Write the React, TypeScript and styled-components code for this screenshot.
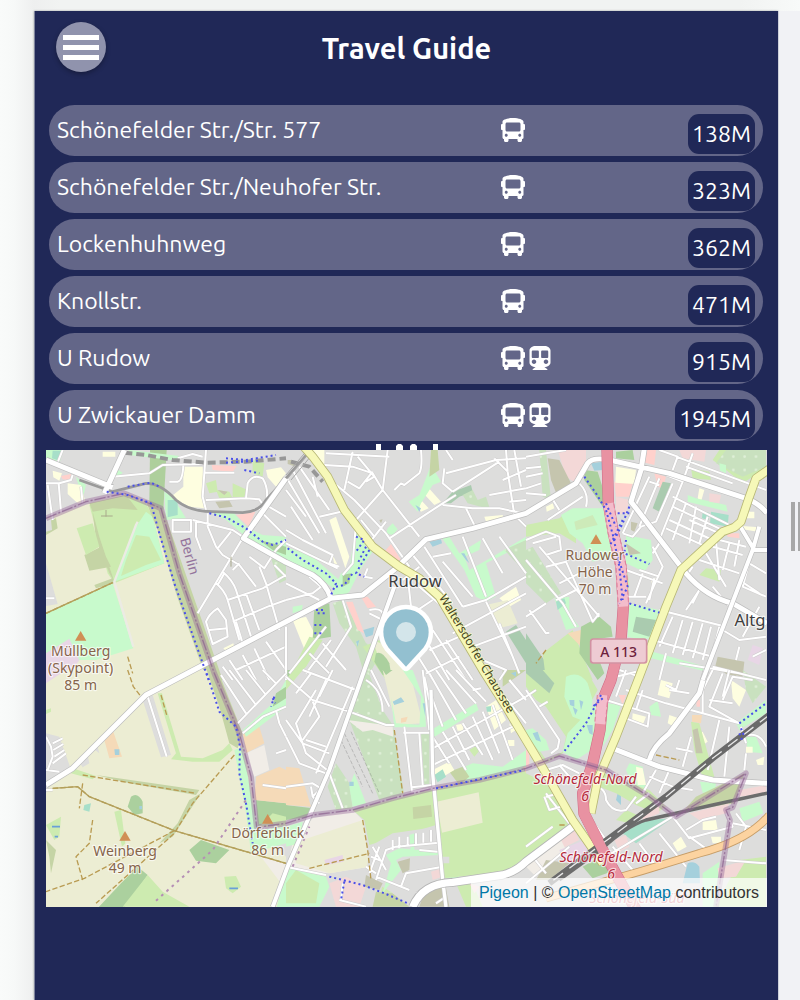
import React from 'react';
import styled, { createGlobalStyle } from 'styled-components';
import { FaBus, FaSubway } from 'react-icons/fa';

const navy = '#202857';

const GlobalStyle = createGlobalStyle`
  * { box-sizing: border-box; }
  body { margin: 0; background: #f4f6f5; font-family: Ubuntu, 'Noto Sans', sans-serif; }
`;

const Page = styled.div`
  display: grid;
  grid-template-columns: 34px minmax(0, 1fr) 22px;
  grid-template-rows: 11px auto;
  min-height: 100vh;
  overflow: hidden;
  background: linear-gradient(90deg, #f9fbfa 0, #f7f9f8 14px, #eeefef 34px, #f1f3f2 60px, #f1f3f2 calc(100% - 60px), #f8faf9 100%);
`;

const Panel = styled.main`
  grid-column: 2;
  grid-row: 2;
  padding: 0 11px;
  background: ${navy};
  border-left: 1px solid #7f849d;
  box-shadow: 0 0 2px #9aa09d;
  color: #fff;
`;

const Gutter = styled.div`
  grid-column: 3;
  grid-row: 2;
  display: flex;
  align-items: center;
  gap: 3px;
  padding: 42px 0 0 12px;
  background: #f1f2f5;
  border-left: 1px solid #cdd0da;
  overflow: hidden;
`;

const Grip = styled.span`
  flex: none;
  width: 4px;
  height: 49px;
  background: #a8a8a8;
`;

const Header = styled.header`
  display: grid;
  grid-template-columns: 50px 1fr 50px;
  align-items: center;
  padding: 11px 10px 33px;
`;

const MenuButton = styled.button`
  display: flex;
  flex-direction: column;
  align-items: center;
  justify-content: center;
  gap: 5px;
  width: 50px;
  height: 50px;
  padding: 0;
  border: 0;
  border-radius: 50%;
  background: #9093ad;
  box-shadow: 0 2px 5px rgba(0, 0, 0, 0.3);
`;

const Bar = styled.span`
  width: 36px;
  height: 5px;
  background: #fff;
`;

const Title = styled.h1`
  margin: 0;
  padding-top: 2px;
  font-size: 29px;
  line-height: 36px;
  text-align: center;
`;

const StopList = styled.ul`
  display: grid;
  gap: 6px;
  margin: 0;
  padding: 0 4px 0 3px;
  list-style: none;
`;

const Stop = styled.li`
  display: grid;
  grid-template-columns: minmax(0, 7fr) minmax(0, 4fr);
  height: 51px;
  padding: 0 8px;
  border-radius: 26px;
  background: #636688;
`;

const StopName = styled.span`
  font-size: 23px;
  line-height: 50px;
  white-space: nowrap;
`;

const StopInfo = styled.div`
  display: flex;
  justify-content: space-between;
  align-items: flex-start;
`;

const Modes = styled.span`
  display: flex;
  gap: 3px;
  padding-top: 13px;
  font-size: 24px;
`;

const Distance = styled.span`
  margin-top: 9px;
  padding: 0 4px;
  border-radius: 11px;
  background: ${navy};
  font-size: 23px;
  line-height: 40px;
`;

const Loader = styled.svg`
  display: block;
  width: 64px;
  height: 6px;
  margin: 3px auto 0;
`;

const MapBox = styled.section`
  position: relative;
  height: 457px;
  overflow: hidden;
  background: #dddddc;
`;

const MapDrawing = styled.svg`
  display: block;
  width: 100%;
  height: 100%;
  font-family: 'Noto Sans', sans-serif;
`;

const Attribution = styled.div`
  position: absolute;
  right: 0;
  bottom: 0;
  padding: 0 8px;
  background: rgba(255, 255, 255, 0.7);
  color: #333;
  font: 16px/29px 'Liberation Sans', Arial, sans-serif;
`;

const MapLink = styled.a`
  color: #0078a8;
  text-decoration: none;
`;

const stops = [
  { name: 'Schönefelder Str./Str. 577', distance: '138M', subway: false },
  { name: 'Schönefelder Str./Neuhofer Str.', distance: '323M', subway: false },
  { name: 'Lockenhuhnweg', distance: '362M', subway: false },
  { name: 'Knollstr.', distance: '471M', subway: false },
  { name: 'U Rudow', distance: '915M', subway: true },
  { name: 'U Zwickauer Damm', distance: '1945M', subway: true },
];

const c = {
  farm: '#ecedd3', meadow: '#cdebb0', wood: '#abd09e', mint: '#c8facc', olive: '#c5d4a5',
  pitch: '#a7dfc9', plots: '#c9e1bf', school: '#fefee0', pink: '#f3d8d7', shop: '#ffd1cc',
  sand: '#f5dab8', grave: '#aacbaf', water: '#a5d0dc', grey: '#dddddc', brown: '#c5c5ae',
  lilac: '#e8d6e6', pale: '#f1ede7',
};

type Tile = { x: number; y: number; areas: [string, string][]; streets: string; dots?: string };

const tiles: Tile[] = [
  {
    x: 0, y: -30,
    areas: [
      [c.farm, 'M0 235L130 190 240 160 345 205 520 720H0Z'],
      [c.meadow, 'M130 195L240 165 300 190 320 230 355 370 205 430 185 400Z'],
      [c.mint, 'M300 215L320 230 355 370 205 425 270 260Z'],
      [c.meadow, 'M270 285L310 290 345 360 300 375 225 408 240 360Z'],
      [c.olive, 'M130 190L240 165 275 210 200 205 140 215ZM140 215L160 290 205 425 190 400 150 300ZM115 345L165 320 195 380 130 392ZM145 435L200 415 205 430 150 445ZM0 245L30 235 35 265 0 285Z'],
      [c.meadow, 'M92 265L140 250 160 320 120 345Z'],
      [c.olive, 'M302 190L350 205 530 720H482L390 460 335 270Z'],
      [c.mint, 'M0 520L200 430 262 625 150 660 90 660 0 640Z'],
      [c.lilac, 'M0 640L70 596 100 660 60 720H0Z'],
      [c.grey, 'M0 370L35 492 0 498ZM0 235L15 240 18 270 0 275Z'],
      ['#aecf9c', 'M312 30H362L352 210 310 190Z'],
      [c.mint, 'M0 30H52L40 72 0 55ZM90 110L120 135 110 180ZM205 82L230 98 220 108 200 100ZM250 30L400 48 395 62 250 45ZM355 155L380 170 420 235 360 240Z'],
      [c.pitch, 'M365 180H395V225L365 232ZM20 32H48L40 62 18 55ZM425 85H440V100H425ZM98 158L112 160 108 175 95 170Z'],
      [c.school, 'M412 80H470L475 205 430 200 375 170 412 140ZM65 130L105 135 118 185 95 190 65 162ZM170 35H208V50H170ZM660 90L705 82 720 100 690 140 665 112ZM20 92L48 100 40 122 22 112ZM532 625L562 610 565 622 540 634Z'],
      [c.shop, 'M497 75L572 78 560 96 500 90ZM570 225L628 215 608 260ZM45 108L75 102 72 120 50 118Z'],
      [c.meadow, 'M480 130L510 120 515 155 490 160ZM510 150L550 155 560 175 520 175ZM560 130L604 150 590 180 560 170ZM620 60L655 70 650 110 620 100Z'],
      [c.brown, 'M508 185L550 182 560 200 520 205ZM515 150L545 155 535 165Z'],
      [c.mint, 'M500 220L560 215 600 260 650 285 720 290V372L650 325 600 290 540 240Z'],
      [c.wood, 'M640 300L720 320V345L680 330Z'],
      [c.plots, 'M675 355L720 372V420L700 430Z'],
    ],
    streets: 'M50 30L30 80M0 130H40L75 120 80 105M5 135L20 240M38 130L45 215M105 140L110 190M200 110L310 100 350 75 470 72M480 30L470 170 480 210M370 125H395Q410 122 412 75M395 55L440 42 470 50M475 98H565M480 180L600 175 605 130Q620 100 650 115Q670 150 660 185L640 210M600 175L640 178 655 200M440 240L560 270 590 290M485 220V260L510 320 530 345 580 375 630 440M555 275L515 325M590 295L455 520M580 370L560 390M530 395Q560 420 570 450L615 590M510 430Q535 450 545 480L580 600M640 380L660 430 700 570M610 350L655 385 690 330M545 480L650 445 720 405M560 545L665 500 720 480M480 545Q490 520 515 505L540 540 545 590 500 612ZM490 570L545 565M570 545L590 610M600 460L640 570M535 400L515 435M640 210L720 290M660 195L720 230M690 330L720 300M685 375L720 410M450 240V290L465 330M380 240V275H435V240ZM530 680L560 720M550 660L590 720M590 645L630 720M625 625L670 720M660 605L720 690M570 690L720 620M0 475H25',
    dots: 'M182 155L245 165 315 190 340 280 385 430 440 585 488 720M245 140L315 128 340 140M540 55L600 60 690 45M540 68L640 62M595 90L640 100M490 220L540 232 600 265 650 305 680 315 720 300',
  },
  {
    x: 720, y: -30,
    areas: [
      [c.school, 'M70 30H115V80L95 70ZM130 240L150 230 190 350 178 385ZM140 345L160 385 145 375ZM420 135L465 185 445 195 412 160ZM400 175L428 205 405 215 390 195ZM595 230L650 225 655 238 600 245ZM20 540L60 530 85 580 60 640ZM640 475L690 440 705 480 670 500Z'],
      [c.mint, 'M435 75L465 125 440 135 405 190 395 215 368 185 400 165ZM305 265L320 250 335 268 320 285 300 280ZM205 280L225 275 260 335 225 385 190 455 160 480 135 470 165 400 190 390ZM0 320L80 350 160 420 150 450 80 400 0 360ZM465 290H490L520 340 585 300 580 330 535 350 550 390 620 350 720 290V310L600 370 630 470 600 485 570 470 535 390ZM20 500L50 495 48 510 20 520Z'],
      [c.olive, 'M435 30H455L460 90 430 110Z'],
      [c.grave, 'M470 190L500 155 555 135 560 155 520 170 495 190ZM660 575L690 555 720 600V670Z'],
      [c.plots, 'M530 165L560 150 575 180 600 170 612 208 545 190ZM140 490L170 480 215 560 240 610 290 630 240 720 210 620 160 550ZM655 330L720 300V400Z'],
      [c.shop, 'M315 312L345 360 320 370 295 335ZM180 485H200L235 580 215 570ZM225 470H245L270 500 245 505Z'],
      [c.wood, 'M170 405L195 400 190 430 170 440ZM85 500L130 490 135 590 80 600Z'],
      [c.meadow, 'M70 590L110 600 60 680 20 720H5ZM230 620L280 600 330 720H300Z'],
      [c.farm, 'M600 495L665 480 695 550 640 565ZM260 600L310 620 370 720H300Z'],
      [c.wood, 'M270 640Q290 630 310 670L315 700 290 705 265 665Z'],
      [c.water, 'M430 305L465 298 468 310 440 320ZM525 340H535L550 370 540 360ZM232 570L265 560 260 585 240 592ZM210 605L220 600 215 620ZM388 195L405 205 400 215Z'],
      [c.brown, 'M5 60L20 60 30 80 5 72ZM280 240L290 238 285 250Z'],
    ],
    streets: 'M115 75L200 80M200 35L175 150M120 40L310 50M200 80L260 100 290 150 400 290M305 30L290 150 210 240M215 50L265 110 240 125M185 125L220 145 260 95M405 30Q410 80 400 100L355 135 345 130 325 150M475 85L470 130 500 155M480 100L630 60 720 55M500 155L640 65M510 165L470 190 310 295M470 195L560 205 640 205 720 222M625 55L665 95 685 225M660 30L665 95M685 30L705 140M610 165L720 145M670 185L720 180M720 90L650 120M540 205L570 265M480 30L500 60M0 110L100 280M20 90L120 280M0 150L60 230M15 200L80 300M40 80L130 210M0 270L50 300 140 345 130 370 160 380M0 310L155 385M100 230L165 215M95 170L80 110M145 130L205 180 300 280 370 380M300 245L265 290M225 240L265 290 240 320M210 250L200 370 170 405M245 385L235 410 260 415M415 320L530 500M380 345L500 490M440 350L495 340M400 380L350 420M470 365L560 470M530 500L600 480 720 410M480 500L580 640M530 290L600 470M590 295L650 400M640 290L720 400M720 260L690 230M600 485L680 650M500 580L720 460M440 480L380 520M365 410L375 500M560 620L720 560M400 440L470 500M70 410L105 440 80 460M0 430L100 480M0 480L80 460M170 480L195 560 120 680M135 600L60 700M0 560V720M120 560L10 700M110 610L180 690M70 640L130 700M250 510Q300 500 290 540L250 520M390 640L440 720M420 600L490 720M440 570L540 720M480 600L560 720M430 630L520 590M590 660L660 690 640 720M640 550L700 700M420 700L520 650',
    dots: 'M5 325L50 360 120 400 150 430 135 465M210 290L235 300 210 335M250 330L210 400 235 410M240 320L215 370M150 440L175 435 200 400M90 510H120M95 520H120M85 555H115M85 580H115',
  },
  {
    x: 1440, y: -30,
    areas: [
      [c.pink, 'M95 30H180V90L150 130 120 110ZM460 30H540L535 65 470 55Z'],
      [c.brown, 'M65 55L100 60 135 130 95 170 75 120Z'],
      [c.plots, 'M40 30H60L75 180 50 170ZM0 330L20 320 105 460 60 490 0 430Z'],
      [c.shop, 'M265 125L320 130 310 170 270 170ZM385 100L420 110 410 145 395 140ZM350 30H390L385 75 345 65ZM600 280H640V295L605 290Z'],
      [c.school, 'M270 80L330 90 325 132 268 128ZM60 200L80 190 85 205 62 215ZM520 145L535 150 525 185 515 175ZM655 215H685V235H655ZM650 258L700 262 695 275 650 268ZM375 415H390V435H378Z'],
      [c.wood, 'M175 90L215 95 245 190 230 200 175 120ZM270 35L320 30 325 60 270 55Z'],
      [c.water, 'M195 70L230 65V90L205 92Z'],
      [c.meadow, 'M0 255L100 235 130 210 150 260 150 310 100 280 0 290ZM580 30H720V85L650 130 600 90 560 60ZM495 85L550 95 555 120 500 115ZM540 385L585 390 580 425 520 405Z'],
      [c.plots, 'M600 30H720V80L650 110 570 70Z'],
      [c.mint, 'M105 225L140 205H230L260 280 255 350 200 365 170 310 130 280ZM300 285L375 300 380 360 355 395 300 370ZM485 165L510 175 600 195 605 215 485 185ZM310 490L400 510 380 590 350 600 305 590ZM85 475L130 470 130 520 160 560 120 570ZM580 70L600 75V100L582 92Z'],
      ['#cdeab9', 'M145 245L200 225 215 255 150 270ZM300 370L310 430 305 490 290 440Z'],
      [c.pitch, 'M555 215L608 225 605 260 552 250ZM530 215L550 218 548 240 528 235ZM90 485L115 475 120 490 95 510Z'],
      [c.grave, 'M410 125L435 130 400 215 380 205ZM0 580L75 690 60 720H0ZM330 530L390 540 370 590 320 575Z'],
      [c.brown, 'M300 310L345 340 310 345ZM315 245L335 250 325 275 315 270ZM575 650L655 665 650 710 565 690Z'],
      [c.meadow, 'M50 640L140 570 200 720H60Z'],
      [c.sand, 'M125 580L165 570 190 610 180 635Z'],
      [c.wood, 'M165 560L220 530 255 560 260 590 195 600 235 700 215 720 160 640Z'],
      [c.mint, 'M380 635L540 680 530 692 375 655Z'],
      [c.lilac, 'M680 615L710 625 700 675 665 660Z'],
      [c.pink, 'M550 160L585 165 580 190 550 185ZM270 170L310 180 300 220 270 225Z'],
    ],
    streets: 'M0 85L45 80M0 110L50 100M0 145L45 130M0 160L60 165M0 50L60 40 120 30M65 240L170 170M75 170L100 210M160 130Q190 160 180 200M370 110L290 280M400 115L340 260M290 280L320 290 345 260 390 245 440 130M370 125L400 135M420 105L470 125 440 200 400 300M470 125L500 40M440 170L620 260M440 200L600 275M430 240L560 300M420 265L540 320M480 190L440 300M510 200L490 310M545 230L520 310M440 90L455 50 400 30M450 50L720 150M480 80L620 130M490 240L580 280M580 300L660 320M560 320L650 345M640 300L625 380M610 310L590 390M540 340L600 440M520 360L640 400M500 380L480 410M570 300L580 420M670 370L720 400M640 420L700 460M680 330L650 440 720 470M380 320L410 380 360 490M340 390L400 410M300 390L410 430M350 400L325 470M385 415L370 480M400 310L380 340M0 300L60 275 100 290 105 330 60 345M0 360L110 490 150 560M40 320L220 530M20 310L90 290M60 380L120 365 200 545 220 520M100 430L160 400M90 480L150 450M0 530L60 490M10 510L60 580 70 578M480 510L520 450 500 490M400 510L600 560M380 600L560 650M440 530L400 620M470 540L440 640M500 545L470 645M530 550L500 655M555 560L530 660M580 560L560 640M590 570L640 600 720 590M560 680L720 720M640 620L630 660M720 630L680 650M280 690L340 710M420 640L400 720M460 670L640 700M700 500L650 590M610 500L560 440M360 470L290 470',
    dots: 'M175 110L210 160 240 210 262 290 280 380 290 480M310 200L290 250 265 300M275 220H310M290 240L250 320M300 300L295 340 370 372M275 350L305 440 280 490M310 490L400 518M240 190L270 260',
  },
  {
    x: 0, y: 660,
    areas: [
      [c.farm, 'M0 0H510L580 190 615 320 630 470 720 560V720H0Z'],
      [c.lilac, 'M0 0H60L0 40Z'],
      [c.olive, 'M482 0H515L590 190 575 235 550 220 520 110Z'],
      [c.grey, 'M290 90L320 75 375 255 345 262ZM0 190L40 200 72 290 25 325 0 370ZM95 270L125 255 130 280 110 292ZM140 235L155 230 160 250ZM540 0H720V300L690 300 640 210 590 190Z'],
      [c.meadow, 'M335 70H348L405 260 470 265 530 240 550 220 560 240 520 275 440 275 375 268 390 250ZM80 295L150 318 140 328 75 310ZM0 120L15 115V125L0 132ZM205 425L225 420 238 520 228 530ZM0 465L45 440 40 500 25 510ZM535 620L570 618 585 650 560 670 540 655Z'],
      [c.olive, 'M150 315L460 360 450 375 250 340ZM465 370L380 500 340 520 395 460 430 390ZM0 510L30 540 15 610 10 560Z'],
      [c.wood, 'M255 380Q275 365 290 395L290 430 265 435 245 410ZM430 540L465 510 550 540 510 580 450 572ZM630 390L720 400V440L635 470ZM150 720L225 640 275 590 305 615 230 720Z'],
      [c.sand, 'M175 210L200 180 228 260 190 265ZM590 190L640 170 655 220 600 250ZM630 320L700 290 720 300V400L625 390Z'],
      [c.pale, 'M600 250L655 225 670 300 625 320ZM645 560L720 580V660Z'],
      [c.mint, 'M590 180L680 100 720 30V110L600 200ZM565 240L590 230 620 400 635 480 720 470V520L615 550 600 430ZM720 600L690 720H720Z'],
      [c.wood, 'M690 70L720 50V85L680 110Z'],
      [c.meadow, 'M305 615L350 665 430 710H230ZM640 470L680 430 720 440V470Z'],
      [c.water, 'M205 238H220V255H207ZM280 408H288V418H280Z'],
      [c.pitch, 'M115 405L135 400 130 425 112 420Z'],
    ],
    streets: 'M305 80L362 260M525 15L600 130M550 0L630 105M600 0L660 75M650 0L690 40M575 160L720 10M0 200L15 230 20 260 5 300M20 220L50 205M22 240L52 222M25 260L55 240M0 300L40 305M590 190L650 140 720 110M690 120L700 160 720 200M690 250L720 240M650 345L720 355M0 360H20M20 280L60 250',
    dots: 'M482 10L520 125 570 170 582 230 580 310 600 400 620 520M685 80L675 110M680 85L688 100',
  },
  {
    x: 720, y: 660,
    areas: [
      [c.plots, 'M230 0H245L290 120 320 165 355 375 280 390 190 150ZM125 350L150 280 190 340 200 415 150 420ZM405 190H430V345H415Z'],
      [c.pale, 'M185 150L320 168 322 200 260 180 230 185ZM20 520L80 445 200 420 230 450 250 590 130 610 0 600Z'],
      [c.farm, 'M290 0L370 0 410 160 330 165ZM20 520L230 450 250 590 130 610 30 580ZM450 395L578 368 590 460 470 490Z'],
      [c.mint, 'M350 0H380L415 90 420 170 400 172 405 80ZM315 80L330 160 410 165V172H325ZM435 180L570 100 578 120 438 205ZM500 305L560 280 650 290 720 240V300L520 345ZM190 350L205 310 240 400 200 410ZM0 470L50 455 40 520 0 530ZM0 590L120 620 130 650 100 710H0ZM480 590L520 585V625H480Z'],
      [c.farm, 'M455 397L578 368 590 460 470 490Z'],
      [c.meadow, 'M200 420L440 358 450 465 250 525 235 450ZM445 358L720 300V560L660 605 470 625 460 490 448 400ZM510 640L560 640 590 710H540ZM0 0L50 0 0 60ZM300 600L320 570 350 600 330 670 285 665Z'],
      [c.farm, 'M452 395L578 367 590 458 468 488Z'],
      [c.olive, 'M380 412L435 405 438 440 382 447ZM490 305L530 290 550 320 520 345ZM650 0H720L650 50ZM270 665L320 670 370 710H260Z'],
      [c.wood, 'M0 405L80 415 70 440 0 450ZM0 0H20L0 30ZM290 0L320 0 300 15Z'],
      [c.sand, 'M0 290L40 295 75 410 0 405ZM345 145L365 140 360 155 345 158ZM710 290L720 290V310Z'],
      [c.water, 'M320 95L345 82 355 95 325 105ZM410 100H418V140ZM190 335H203V348H190ZM675 10L690 5V20Z'],
      [c.school, 'M440 300L490 275 505 300 455 330ZM600 110L630 90 660 150 625 180ZM510 165L535 160 530 182 515 182ZM665 210H685V228H665ZM670 160L690 180 675 190ZM390 610L435 620 430 650 400 645Z'],
      [c.pitch, 'M445 315L470 298 480 320 455 337ZM600 110L615 108V125H603ZM405 600H425V615H408Z'],
      [c.meadow, 'M550 240L575 225 582 240 565 260ZM0 640L30 600 100 640 90 700H0Z'],
      [c.pink, 'M130 640L180 620 240 650 220 710H150ZM430 600L470 590 465 630 440 625ZM550 640L580 650 565 670ZM420 670L445 655V670L430 685Z'],
      [c.lilac, 'M115 570L170 555 172 575 120 585Z'],
      [c.grey, 'M250 530L320 490 455 470 470 620 430 650 370 700 240 620ZM470 560H490V580H470Z'],
      [c.mint, 'M300 555L340 535 460 545V555L350 560 330 570 345 600 290 670 315 580ZM370 495L385 490V550H375Z'],
      [c.brown, 'M335 575L372 565 370 600 350 610ZM240 615L290 640 280 660 235 650ZM420 650L480 655 490 710H400Z'],
      [c.pink, 'M435 605L468 595 470 620 440 630Z'],
    ],
    streets: 'M0 20L80 90 190 125 300 165 325 165M50 0L210 60M75 10L30 70M120 30L70 140M200 50L90 310M90 60L30 160 60 250 130 305M0 150L50 220 130 250M60 210L120 230M140 0L100 80M0 200L40 280 120 310M80 95L100 140 50 210M240 30Q290 60 290 125M255 0L310 110M355 170L378 365 440 355M352 188H430M400 190L410 345M378 352L440 345M415 20L430 90M410 0L430 180M435 75L470 170M430 10L510 150M450 0L540 130M480 0L570 100M510 0L600 95M540 0L560 30M440 235L620 135 720 80M440 285L680 170M440 200L490 280M470 185L540 300M500 170L550 270M530 160L590 255M560 140L620 270M590 125L640 250M620 105L680 270M640 60L720 160M670 30L720 90M560 60L585 55M260 530L300 600M320 510V540M340 500V535M365 500V530M390 490V525M412 488V518M435 480V515M0 350L80 340 105 355 80 380 75 350M80 380L100 400M130 310L170 415M270 630L300 540 330 530 460 518M250 610L280 530M240 590L270 610M255 560L290 575M270 620L370 660M345 650L360 610 470 590M160 690L240 710M165 690L170 640M400 540L455 545M0 590L120 615M390 670L430 650M450 700L480 680',
    dots: 'M130 620L230 645 300 672 370 702M175 635L165 690M450 355L560 332 715 300',
  },
  {
    x: 1440, y: 660,
    areas: [
      [c.meadow, 'M20 0H180L215 60 110 250 60 280 0 190V0ZM0 310L60 340 135 460 0 560Z'],
      [c.grave, 'M0 0H50L85 40 70 70 0 10Z'],
      [c.grey, 'M0 50L30 90 60 110 120 200 110 245 60 270 0 180Z'],
      [c.mint, 'M120 20Q160 0 185 40L200 90 190 160 140 140 115 80ZM0 180L20 175 60 210 70 240 40 245 0 190ZM125 190L220 90 212 230 150 270 110 245ZM240 100L285 105 260 180 230 230ZM370 110L395 92 405 140 375 135ZM640 415L700 395 712 430 650 455ZM522 335L570 340 565 370 530 368ZM630 160L720 90V130L640 180ZM530 610L580 575 570 710H530ZM660 200L690 200 710 250 665 245ZM310 280L350 290 360 350 330 370 300 300Z'],
      [c.water, 'M130 90H145V110L132 105ZM20 190L35 185 45 215 30 210ZM160 90L172 95 165 120ZM182 165H200V195L190 190ZM140 110L155 120 148 135ZM485 580Q505 570 520 590L522 640H470ZM275 370H285V405L270 390Z'],
      [c.school, 'M405 30L440 40 430 85 395 75ZM320 130L360 140 350 165 318 155ZM430 135L458 145 445 170 425 160ZM505 200L530 185 545 215 510 240ZM440 520L465 500 482 530 455 545ZM530 455L570 450 575 480 530 480ZM615 30L660 60 640 110 620 85ZM660 230H680V248H660ZM690 270L715 260 712 285 695 285ZM555 500H585V520H560ZM330 290L350 295 360 345 335 345ZM260 340L300 345 280 365Z'],
      [c.sand, 'M498 135H528L525 160 498 155Z'],
      [c.plots, 'M650 0L720 50 680 100 660 60Z'],
      [c.meadow, 'M495 155L520 160 565 320 530 325 505 240ZM180 290L370 360 420 410 390 430 330 405 270 370 220 350ZM640 570L720 560V710H570ZM300 420L345 440 310 460 270 450Z'],
      [c.wood, 'M170 590L240 550 270 600 200 625Z'],
      [c.olive, 'M510 380L655 310 625 400 470 425Z'],
      [c.pitch, 'M290 490L360 450 440 445 330 520Z'],
      [c.pink, 'M490 430L610 400 600 430 520 450ZM100 490L140 470 160 510 110 535ZM265 510L300 495 310 530 280 545ZM575 595L660 570 630 620 580 625ZM350 430L400 400 400 430 350 450ZM640 360L720 345V370L640 380Z'],
      [c.shop, 'M278 75H300L290 105ZM510 90H522V110H512ZM0 240H10V290H0Z'],
      [c.pale, 'M0 590L100 500 120 540 30 620Z'],
      [c.lilac, 'M100 540L190 505 200 540 120 600Z'],
      [c.brown, 'M590 0H640L630 18 600 12ZM60 570L130 580 70 630 30 630ZM500 180L515 175 530 250 510 250Z'],
      [c.mint, 'M645 420L700 400 710 425 655 447Z'],
    ],
    streets: 'M0 60L100 210 95 235 75 250M40 110L65 95M30 60L0 80M300 0L270 80M300 60L420 100 640 160M270 20L330 5M240 90L370 130 365 170 300 145M460 30L450 60 420 45M430 60L490 70M530 60V130M590 10L550 110 640 160M590 90L620 20 680 30M550 90L620 100M610 170L595 320M580 150L545 300M645 170L660 220M660 250L655 300M650 200Q700 180 720 230M450 235L500 245M495 200L470 290M370 320L440 350 500 360M390 300L350 370M430 300L400 370M440 440L490 505 620 470 600 430M480 480L530 450 570 440M490 500L560 550M330 400L370 370M200 350Q240 350 240 390Q260 430 300 420L330 380M190 440L240 510M60 370L130 460M60 380L100 370 105 410 70 420 55 380M60 300L110 285 160 310M100 285L130 320M620 460L720 480M630 430L660 470M340 520L400 600M260 530L320 600M240 560L440 440M400 490L480 590M320 560L420 590M0 640L130 530M20 560L60 610M660 470L640 540M590 570L720 580M560 0L530 60M0 530L80 470M330 120L350 60M610 0L590 80',
    dots: 'M225 75L180 160 110 250M230 85L200 110M640 160L720 100M640 190L650 215M645 175L655 200',
  },
];

const yellowRoads = 'M770 -14L800 20 845 80 895 180 980 290 1060 350 1120 385 1180 440 1310 660 1380 770 1440 870 1500 970 1580 1110 1670 1240M2170 57L2130 85 2110 140 2085 215 2065 232 2030 245 1905 360 1860 470 1780 680 1710 860 1655 990 1635 1090';
const mainRoads = 'M0 30L200 112M235 0L175 130M0 1005L80 955 300 735 500 630 720 515 855 445 950 435 1050 355 1140 268 1280 235 1440 190 1590 100 1625 40Q1640 20 1690 30L1870 70 2100 145Q2140 160 2163 190M1795 -5L1785 60 1755 155 1920 370Q1980 440 2060 460L2163 520M1980 660L1960 730 1870 850Q1820 890 1810 930M1700 895L1840 950 2000 990 2163 1000M720 85L592 265 720 337 800 375Q840 400 855 445';
const innerRoads = 'M2140 230L2120 300 1970 690M2080 225L2125 300H2163M1045 410L955 660 850 960 725 1250 680 1371';
const motorway = 'M1683 -8L1687 160 1702 250 1725 350 1732 470 1725 570 1695 690 1670 750 1662 840 1640 940 1610 1030 1614 1090 1670 1200 1770 1380';
const border = 'M0 205L120 155 235 130 345 175 400 370 505 670 580 850 615 980 632 1132 720 1120 800 1095 920 1080 1040 1045 1160 1015 1300 990 1440 955 1540 918 1680 960 1810 1040 1890 1100 2100 970 2060 1072 2040 1080 2052 1110 2010 1371';
const footpaths = 'M0 490L200 398M20 1015L95 1010 130 1040 385 1142 720 1240M385 1142L115 1285 0 1325M110 975L200 990 450 1030M565 915L440 1060 385 1150 150 1360M245 660L262 710 285 740M345 735L362 795M245 620L260 670M110 1000L100 1075M140 1110L130 1180 90 1220 110 1290M950 1110L965 1200 975 1290M790 1255L970 1210M1045 840L1070 1030M1540 1125H1560M1830 915L1900 930M1500 600L1470 640';
const smallDetails = 'M555 320V350M180 180V200M165 198H200';

const Peak = ({ x, y }: { x: number; y: number }) => (
  <path d={`M${x} ${y}l17 29h-34Z`} fill="#d08f55" />
);

type LabelProps = { x: number; y: number; lines: string[]; fill: string; size?: number; italic?: boolean; gap?: number };

const Label = ({ x, y, lines, fill, size = 42, italic, gap = 51 }: LabelProps) => (
  <text
    textAnchor="middle"
    fontSize={size}
    fontStyle={italic ? 'italic' : 'normal'}
    fill={fill}
    stroke="#fff"
    strokeOpacity="0.65"
    strokeWidth="7"
    strokeLinejoin="round"
    paintOrder="stroke"
  >
    {lines.map((line, i) => (
      <tspan key={line} x={x} y={y + i * gap}>{line}</tspan>
    ))}
  </text>
);

const CityMap = () => (
  <MapDrawing viewBox="0 0 2163 1371" preserveAspectRatio="xMidYMid slice" role="img" aria-label="Map of Rudow">
    <defs>
      <pattern id="trees" width="34" height="40" patternUnits="userSpaceOnUse">
        <circle cx="10" cy="10" r="4" fill="#e0f0d8" />
      </pattern>
      <path id="chaussee" d="M1098 470L1170 428 1302 650 1430 865" />
    </defs>
    <rect width="2163" height="1371" fill={c.grey} />
    {tiles.map((t) => (
      <g key={`a${t.x}-${t.y}`} transform={`translate(${t.x} ${t.y})`}>
        {t.areas.map(([fill, d], i) => (
          <g key={i}>
            <path d={d} fill={fill} />
            {fill === c.plots && <path d={d} fill="url(#trees)" />}
          </g>
        ))}
      </g>
    ))}
    <g fill="none" strokeLinejoin="round">
      {tiles.map((t) => (
        <g key={`s${t.x}-${t.y}`} transform={`translate(${t.x} ${t.y})`}>
          <path d={t.streets} stroke="#cfcdcd" strokeWidth="9" />
          <path d={t.streets} stroke="#fff" strokeWidth="6" />
        </g>
      ))}
      <path d="M275 215L270 225 205 395 262 590" stroke="#ecebe4" strokeWidth="7" />
      <path d="M1155 720L1160 970 1190 1290 1200 1371" stroke="#c8c8c8" strokeWidth="14" />
      <path d="M1155 720L1160 970 1190 1290 1200 1371" stroke="#fff" strokeWidth="10" />
      <path d={footpaths} stroke="#b99b52" strokeWidth="4" strokeDasharray="16 7" />
      <path d="M0 490L200 398M20 1015L95 1010 130 1040 385 1142 720 1240" stroke="#b3a05b" strokeWidth="4" />
      <path d="M330 1352L400 1290 500 1200 600 1050M740 1250L790 1130" stroke="#b58fb5" strokeWidth="6" strokeDasharray="8 13" />
      <path d="M235 8L300 15 380 30 480 38 600 35 720 25M735 35L790 50 830 95" stroke="#979797" strokeWidth="12" strokeDasharray="24 12" />
      <path d="M100 90L200 125 300 100Q345 100 390 150 430 185 500 185L590 188Q640 185 660 150L720 85 790 5" stroke="#9a9a9a" strokeWidth="8" />
      <path d="M720 75L780 5M725 85L790 8M735 90L800 12" stroke="#aaa" strokeWidth="3" />
      <g stroke="#777" strokeOpacity="0.55" strokeWidth="2">
        <path d="M895 850L980 1030M915 845L1000 1030M885 870L950 1010" strokeDasharray="12 5" />
      </g>
      <path d={mainRoads} stroke="#bdbdbd" strokeWidth="19" />
      <path d={mainRoads} stroke="#fff" strokeWidth="15" />
      <path d={innerRoads} stroke="#bfbfbf" strokeWidth="16" />
      <path d={innerRoads} stroke="#fff" strokeWidth="12" />
      <path d="M1100 1371Q1130 1300 1220 1297L1370 1275Q1410 1265 1440 1235L1580 1130" stroke="#b5b5b5" strokeWidth="27" />
      <path d="M1100 1371Q1130 1300 1220 1297L1370 1275Q1410 1265 1440 1235L1580 1130" stroke="#fff" strokeWidth="22" />
      <path d="M2170 1095Q2110 1170 1960 1210L1790 1262 1500 1345" stroke="#c69d68" strokeWidth="25" />
      <path d="M2170 1095Q2110 1170 1960 1210L1790 1262 1500 1345" stroke="#fcd3a0" strokeWidth="20" />
      <path d={yellowRoads} stroke="#b7b775" strokeWidth="27" />
      <path d={yellowRoads} stroke="#f6f8b8" strokeWidth="22" />
      <path d={motorway} stroke="#cf6a86" strokeWidth="34" />
      <path d={motorway} stroke="#e892a2" strokeWidth="31" />
      <path d="M1687 160L1702 250 1725 350 1732 470M1670 735L1662 822" stroke="#f3bccb" strokeWidth="32" />
      <path d="M1672 160L1687 250 1710 350 1717 470M1703 160L1718 250 1741 350 1748 470M1654 735L1646 822M1686 735L1678 822" stroke="#de7f9a" strokeWidth="3" strokeDasharray="14 8" />
      <path d="M2170 795L2000 925 1860 1040 1670 1180 1510 1300" stroke="#6a6a6a" strokeWidth="19" />
      <path d="M2170 795L2000 925 1860 1040 1670 1180 1510 1300" stroke="#e8e8e8" strokeWidth="4" strokeDasharray="36 24" />
      <path d="M2170 1028L2000 1065 1800 1110Q1740 1130 1670 1195L1540 1290" stroke="#6d6d6d" strokeWidth="10" />
      <path d="M1614 1090L1670 1200 1700 1250" stroke="#e892a2" strokeWidth="31" />
      <path d={border} stroke="#9b6f9d" strokeOpacity="0.45" strokeWidth="17" />
      <path d={border} stroke="#8b618f" strokeOpacity="0.7" strokeWidth="4" strokeDasharray="34 6 6 6" />
      {tiles.map((t) => (
        <path key={`d${t.x}-${t.y}`} transform={`translate(${t.x} ${t.y})`} d={t.dots} stroke="#4a50e8" strokeWidth="6" strokeDasharray="6 9" />
      ))}
      <path d={smallDetails} stroke="#a9a98c" strokeWidth="3" />
      <path d="M18 1130H42M26 1160H36M550 1315H576" stroke="#6a9fd8" strokeWidth="5" />
    </g>
    <Peak x={104} y={543} />
    <Peak x={1650} y={253} />
    <Peak x={237} y={1143} />
    <Peak x={665} y={1092} />
    <Label x={104} y={617} lines={['Müllberg', '(Skypoint)', '85 m']} fill="#86644b" />
    <Label x={1647} y={329} lines={['Rudower', 'Höhe', '70 m']} fill="#86644b" />
    <Label x={237} y={1217} lines={['Weinberg', '49 m']} fill="#86644b" />
    <Label x={665} y={1165} lines={['Dörferblick', '86 m']} fill="#86644b" />
    <Label x={1107} y={411} lines={['Rudow']} fill="#3f3f3f" size={50} />
    <Label x={2112} y={528} lines={['Altg']} fill="#3f3f3f" size={50} />
    <Label x={1617} y={1001} lines={['Schönefeld-Nord', '6']} fill="#b5283a" italic />
    <Label x={1695} y={1237} lines={['Schönefeld-Nord', '6']} fill="#b5283a" italic />
    <Label x={1773} y={1358} lines={['Schönefeld-Süd']} fill="#d56d7a" italic />
    <text transform="translate(402 268) rotate(74)" fontSize="41" fill="#93739b">Berlin</text>
    <text fontSize="36" fill="#444422" stroke="#f6f8b8" strokeWidth="4" paintOrder="stroke">
      <textPath href="#chaussee" startOffset="100">Waltersdorfer Chaussee</textPath>
    </text>
    <rect x="1634" y="567" width="168" height="72" rx="8" fill="#eecbd3" stroke="#d292a3" strokeWidth="5" />
    <text x="1718" y="620" textAnchor="middle" fontSize="42" fontWeight="500" fill="#6d1f3d">A 113</text>
    <path
      d="M1080 650L1028 593Q1012 572 1012 546A68 68 0 0 1 1148 546Q1148 572 1132 593Z"
      fill="#93c0d0"
      stroke="#fff"
      strokeWidth="27"
      strokeLinejoin="round"
      paintOrder="stroke"
    />
    <circle cx="1080" cy="546" r="30" fill="#d3e5ea" />
  </MapDrawing>
);

export default function App() {
  return (
    <Page>
      <GlobalStyle />
      <Panel>
        <Header>
          <MenuButton type="button" aria-label="Open menu">
            <Bar />
            <Bar />
            <Bar />
          </MenuButton>
          <Title>Travel Guide</Title>
        </Header>
        <StopList>
          {stops.map((stop) => (
            <Stop key={stop.name}>
              <StopName>{stop.name}</StopName>
              <StopInfo>
                <Modes>
                  <FaBus />
                  {stop.subway && <FaSubway />}
                </Modes>
                <Distance>{stop.distance}</Distance>
              </StopInfo>
            </Stop>
          ))}
        </StopList>
        <Loader viewBox="0 0 64 6" fill="#fff" aria-hidden="true">
          <path d="M1 0h5v6H1ZM23 0h3l2 2v4h-7V2ZM37 0h3l2 2v4h-7V2ZM58 0h5v6h-5Z" />
        </Loader>
        <MapBox>
          <CityMap />
          <Attribution>
            <MapLink href="https://pigeon-maps.js.org/">Pigeon</MapLink>
            {' | © '}
            <MapLink href="https://www.openstreetmap.org/copyright">OpenStreetMap</MapLink>
            {' contributors'}
          </Attribution>
        </MapBox>
      </Panel>
      <Gutter>
        <Grip />
        <Grip />
      </Gutter>
    </Page>
  );
}
